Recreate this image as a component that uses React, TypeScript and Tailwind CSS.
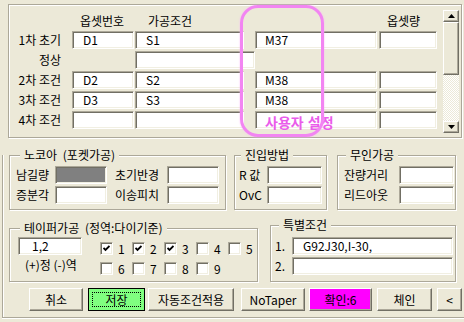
import React from "react";

const sunken =
  "border border-t-[#aca899] border-l-[#aca899] border-b-white border-r-white shadow-[inset_1px_1px_0_#716f64,inset_-1px_-1px_0_#f1efe2]";
const raised =
  "border border-t-white border-l-white border-b-[#716f64] border-r-[#716f64] shadow-[inset_-1px_-1px_0_#aca899]";
const etched = "border border-[#aca899] shadow-[inset_1px_1px_0_#fff,1px_1px_0_#fff]";

const Field = ({ className = "", children }: { className?: string; children?: React.ReactNode }) => (
  <div className={`${sunken} flex h-[18px] shrink-0 items-center bg-white leading-[14px] ${className}`}>{children}</div>
);

const Group = ({
  title,
  titleClass,
  className,
  children,
}: {
  title: string;
  titleClass: string;
  className: string;
  children: React.ReactNode;
}) => (
  <div className={`relative shrink-0 ${etched} ${className}`}>
    <span className={`absolute -top-[8px] bg-[#ece9d8] px-[4px] leading-[14px] ${titleClass}`}>{title}</span>
    {children}
  </div>
);

const Arrow = ({ down }: { down?: boolean }) => (
  <svg width="7" height="4" viewBox="0 0 7 4">
    <path d={down ? "M0 0H7L3.5 4Z" : "M3.5 0L7 4H0Z"} fill="#000" />
  </svg>
);

const Check = ({ on }: { on?: boolean }) => (
  <div className={`${sunken} flex h-[13px] w-[13px] shrink-0 items-center justify-center bg-white`}>
    {on && (
      <svg width="7" height="7" viewBox="0 0 7 7">
        <path d="M0.5 3L2.5 5L6.5 1" stroke="#000" strokeWidth="1.8" fill="none" />
      </svg>
    )}
  </div>
);

const rows = [
  { label: "1차 초기", d: "D1", s: "S1", m: "M37" },
  { label: "정상", wide: true },
  { label: "2차 조건", d: "D2", s: "S2", m: "M38" },
  { label: "3차 조건", d: "D3", s: "S3", m: "M38" },
  { label: "4차 조건", d: "", s: "", m: "", custom: true },
];

export default function App() {
  return (
    <div className="h-[322px] w-[464px] overflow-hidden bg-[#ece9d8] font-['Noto_Sans_CJK_KR',sans-serif] text-[12px] text-black">
      {/* 상단 조건 표 */}
      <div className={`relative ml-[8px] mt-[4px] flex h-[134px] w-[454px] ${etched}`}>
        <div className="flex-1 pt-[8px]">
          <div className="flex h-[16px] items-center leading-[16px]">
            <div className="w-[52px]" />
            <div className="ml-[11px] w-[62px] pl-[8px]">옵셋번호</div>
            <div className="ml-[1px] w-[109px] pl-[13px]">가공조건</div>
            <div className="ml-[11px] w-[122px]" />
            <div className="ml-[2px] w-[58px] pl-[8px]">옵셋량</div>
          </div>
          <div className="mt-[2px] flex flex-col gap-[2px]">
            {rows.map((r) => (
              <div key={r.label} className="flex h-[18px] items-center">
                <div className="w-[52px] text-right leading-[14px]">{r.label}</div>
                {r.wide ? (
                  <>
                    <div className="ml-[11px] w-[62px]" />
                    <Field className="ml-[1px] w-[120px]" />
                  </>
                ) : (
                  <>
                    <Field className="ml-[11px] w-[62px] pl-[10px]">{r.d}</Field>
                    <Field className="ml-[1px] w-[109px] pl-[10px]">{r.s}</Field>
                    <Field className="ml-[11px] w-[122px] pl-[9px]">
                      {r.custom ? (
                        <span className="whitespace-nowrap pt-[3px] text-[14px] font-bold leading-[14px] text-[#ea5cea] [word-spacing:1px]">
                          사용자 설정
                        </span>
                      ) : (
                        r.m
                      )}
                    </Field>
                    <Field className="ml-[2px] w-[58px]" />
                  </>
                )}
              </div>
            ))}
          </div>
        </div>
        <div className="mr-[2px] mt-[5px] flex h-[123px] w-[16px] flex-col">
          <div className={`${raised} flex h-[12px] items-center justify-center bg-[#ece9d8]`}>
            <Arrow />
          </div>
          <div className={`${raised} h-[53px] bg-[#ece9d8]`} />
          <div className="flex-1 bg-[repeating-conic-gradient(#ffffff_0_25%,#ece9d8_0_50%)] bg-[length:2px_2px]" />
          <div className={`${raised} flex h-[12px] items-center justify-center bg-[#ece9d8]`}>
            <Arrow down />
          </div>
        </div>
        <div className="pointer-events-none absolute left-[231px] top-0 h-[132px] w-[84px] rounded-[18px] border-[3px] border-[#f285f2] shadow-[0_0_2px_#f8b8f8]" />
      </div>

      {/* 하단 */}
      <div className="ml-[2px] w-[462px] border-b border-l border-[#aca899] pb-[6px] shadow-[inset_1px_0_0_#fff,0_1px_0_#fff]">
        <div className="mt-[17px] flex items-start">
          <Group title="노코아 (포켓가공)" titleClass="left-[10px] [word-spacing:3px]" className="ml-[6px] h-[55px] w-[217px] pl-[6px] pt-[10px]">
            <div className="flex flex-col gap-[2px]">
              <div className="flex items-center">
                <div className="w-[39px] leading-[14px]">남길량</div>
                <div className={`${sunken} h-[18px] w-[52px] bg-[#808080]`} />
                <div className="ml-[8px] w-[52px] leading-[14px]">초기반경</div>
                <Field className="w-[52px]" />
              </div>
              <div className="flex items-center">
                <div className="w-[39px] leading-[14px]">증분각</div>
                <Field className="w-[52px]" />
                <div className="ml-[8px] w-[52px] leading-[14px]">이송피치</div>
                <Field className="w-[52px]" />
              </div>
            </div>
          </Group>
          <Group title="진입방법" titleClass="left-[6px]" className="ml-[8px] h-[55px] w-[93px] pl-[4px] pt-[10px]">
            <div className="flex flex-col gap-[2px]">
              <div className="flex items-center">
                <div className="w-[28px] leading-[14px]">R 값</div>
                <Field className="w-[55px]" />
              </div>
              <div className="flex items-center">
                <div className="w-[28px] leading-[14px]">OvC</div>
                <Field className="w-[55px]" />
              </div>
            </div>
          </Group>
          <Group title="무인가공" titleClass="left-[8px]" className="ml-[10px] h-[55px] w-[119px] pl-[6px] pt-[10px]">
            <div className="flex flex-col gap-[2px]">
              <div className="flex items-center">
                <div className="w-[55px] leading-[14px]">잔량거리</div>
                <Field className="w-[55px]" />
              </div>
              <div className="flex items-center">
                <div className="w-[55px] leading-[14px]">리드아웃</div>
                <Field className="w-[55px]" />
              </div>
            </div>
          </Group>
        </div>

        <div className="flex items-start">
          <Group title="테이퍼가공 (정역:다이기준)" titleClass="left-[10px] [word-spacing:3px]" className="ml-[6px] mt-[18px] flex h-[54px] w-[249px] pl-[8px] pt-[8px]">
            <div className="w-[64px]">
              <Field className="w-[64px] pl-[13px]">1,2</Field>
              <div className="mt-[3px] whitespace-nowrap pl-[7px] leading-[14px]">(+)정 (-)역</div>
            </div>
            <div className="ml-[18px] mt-[5px] grid h-fit grid-cols-[repeat(5,32px)] gap-y-[7px]">
              {[1, 2, 3, 4, 5, 6, 7, 8, 9].map((n) => (
                <div key={n} className="flex h-[13px] items-center">
                  <Check on={n <= 3} />
                  <span className="ml-[5px] leading-[13px]">{n}</span>
                </div>
              ))}
            </div>
          </Group>
          <Group title="특별조건" titleClass="left-[8px]" className="ml-[12px] mt-[15px] h-[57px] w-[186px] pl-[4px] pt-[11px]">
            <div className="flex flex-col gap-[2px]">
              <div className="flex items-center">
                <div className="w-[17px] leading-[14px]">1.</div>
                <Field className="w-[161px] pl-[10px]">G92J30,I-30,</Field>
              </div>
              <div className="flex items-center">
                <div className="w-[17px] leading-[14px]">2.</div>
                <Field className="w-[161px]" />
              </div>
            </div>
          </Group>
        </div>

        <div className="mt-[6px] flex h-[23px] items-stretch leading-[14px]">
          <div className={`${raised} ml-[26px] flex w-[54px] items-center justify-center bg-[#ece9d8]`}>취소</div>
          <div className="ml-[5px] flex w-[57px] border border-black bg-[#80ff80] p-[3px]">
            <div className="flex flex-1 items-center justify-center border border-dotted border-black">저장</div>
          </div>
          <div className={`${raised} ml-[3px] flex w-[86px] items-center justify-center bg-[#ece9d8]`}>자동조건적용</div>
          <div className={`${raised} ml-[7px] flex w-[64px] items-center justify-center bg-[#ece9d8]`}>NoTaper</div>
          <div className={`${raised} ml-[4px] flex w-[63px] items-center justify-center bg-[#ff00ff]`}>확인:6</div>
          <div className={`${raised} ml-[5px] flex w-[55px] items-center justify-center bg-[#ece9d8]`}>체인</div>
          <div className={`${raised} ml-[5px] flex w-[25px] items-center justify-center bg-[#ece9d8]`}>&lt;</div>
        </div>
      </div>
    </div>
  );
}
